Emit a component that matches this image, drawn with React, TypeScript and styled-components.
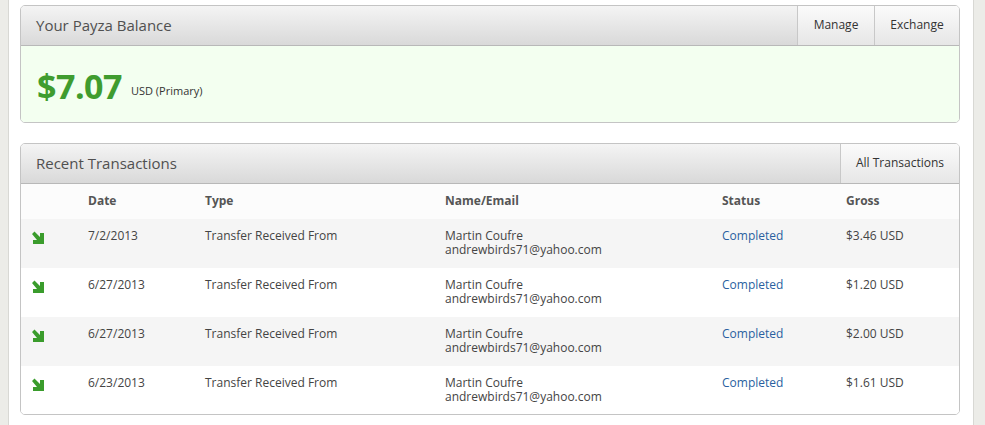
import styled, { createGlobalStyle } from "styled-components";

const GlobalStyle = createGlobalStyle`
  html, body {
    margin: 0;
    padding: 0;
    background: #ecece8;
    font-family: "Open Sans", "Liberation Sans", sans-serif;
  }
  * {
    box-sizing: border-box;
  }
`;

const Page = styled.div`
  margin-left: 8px;
  width: 966px;
  min-height: 425px;
  background: #ffffff;
  border-left: 1px solid #d8d8d4;
  border-right: 1px solid #d8d8d4;
  padding: 5px 13px 10px 11px;
  display: flex;
  flex-direction: column;
  gap: 20px;
`;

const Panel = styled.div`
  border: 1px solid #c4c4c4;
  border-radius: 5px;
  overflow: hidden;
`;

const PanelHeader = styled.div`
  height: 40px;
  display: flex;
  align-items: stretch;
  background: linear-gradient(#f4f4f4, #d9d9d9);
  border-bottom: 1px solid #b8b8b8;
`;

const PanelTitle = styled.div`
  flex: 1;
  display: flex;
  align-items: center;
  padding: 0 0 2px 15px;
  font-size: 15px;
  color: #505050;
`;

const HeaderButton = styled.div<{ $w: number }>`
  width: ${(p) => p.$w}px;
  display: flex;
  align-items: center;
  justify-content: center;
  padding-bottom: 2px;
  font-size: 12px;
  color: #333333;
  border-left: 1px solid #c8c8c8;
  background: linear-gradient(#fbfbfb, #e6e6e6);
`;

const BalanceBody = styled.div`
  height: 76px;
  background: #f3fff0;
  display: flex;
  align-items: center;
  padding: 4px 0 0 16px;
`;

const Amount = styled.span`
  font-size: 34px;
  font-weight: 700;
  color: #3f9c2f;
  letter-spacing: -0.5px;
`;

const Currency = styled.span`
  margin: 8px 0 0 9px;
  font-size: 11px;
  color: #333333;
`;

const Table = styled.div`
  display: flex;
  flex-direction: column;
`;

const cols = "67px 117px 240px 277px 124px 1fr";

const HeadRow = styled.div`
  display: grid;
  grid-template-columns: ${cols};
  height: 35px;
  padding-top: 9px;
  line-height: 16px;
  background: #fcfcfc;
  font-size: 12px;
  font-weight: 700;
  color: #555555;
`;

const Row = styled.div<{ $alt: boolean }>`
  display: grid;
  grid-template-columns: ${cols};
  height: 49px;
  padding-top: 10px;
  align-items: start;
  background: ${(p) => (p.$alt ? "#f5f5f5" : "#ffffff")};
  font-size: 12px;
  line-height: 14px;
  color: #444444;

  &:last-child {
    height: 48px;
  }
`;

const Cell = styled.div``;

const StatusLink = styled.a`
  color: #2a5fa0;
  text-decoration: none;
`;

const ArrowCell = styled.div`
  padding: 2px 0 0 10px;
`;

const InArrow = () => (
  <svg width="14" height="14" viewBox="0 0 14 14">
    <path d="M1 3 L3.5 0.5 L9 6 L9 2 L13 2 L13 13 L2 13 L2 9 L6 9 Z" fill="#3a9c2c" />
  </svg>
);

const rows = [
  { date: "7/2/2013", gross: "$3.46 USD" },
  { date: "6/27/2013", gross: "$1.20 USD" },
  { date: "6/27/2013", gross: "$2.00 USD" },
  { date: "6/23/2013", gross: "$1.61 USD" },
];

export default function App() {
  return (
    <>
      <GlobalStyle />
      <Page>
        <Panel>
          <PanelHeader>
            <PanelTitle>Your Payza Balance</PanelTitle>
            <HeaderButton $w={77}>Manage</HeaderButton>
            <HeaderButton $w={85}>Exchange</HeaderButton>
          </PanelHeader>
          <BalanceBody>
            <Amount>$7.07</Amount>
            <Currency>USD (Primary)</Currency>
          </BalanceBody>
        </Panel>
        <Panel>
          <PanelHeader>
            <PanelTitle>Recent Transactions</PanelTitle>
            <HeaderButton $w={119}>All Transactions</HeaderButton>
          </PanelHeader>
          <Table>
            <HeadRow>
              <Cell />
              <Cell>Date</Cell>
              <Cell>Type</Cell>
              <Cell>Name/Email</Cell>
              <Cell>Status</Cell>
              <Cell>Gross</Cell>
            </HeadRow>
            {rows.map((r, i) => (
              <Row key={i} $alt={i % 2 === 0}>
                <ArrowCell>
                  <InArrow />
                </ArrowCell>
                <Cell>{r.date}</Cell>
                <Cell>Transfer Received From</Cell>
                <Cell>
                  Martin Coufre
                  <br />
                  andrewbirds71@yahoo.com
                </Cell>
                <Cell>
                  <StatusLink href="#">Completed</StatusLink>
                </Cell>
                <Cell>{r.gross}</Cell>
              </Row>
            ))}
          </Table>
        </Panel>
      </Page>
    </>
  );
}
